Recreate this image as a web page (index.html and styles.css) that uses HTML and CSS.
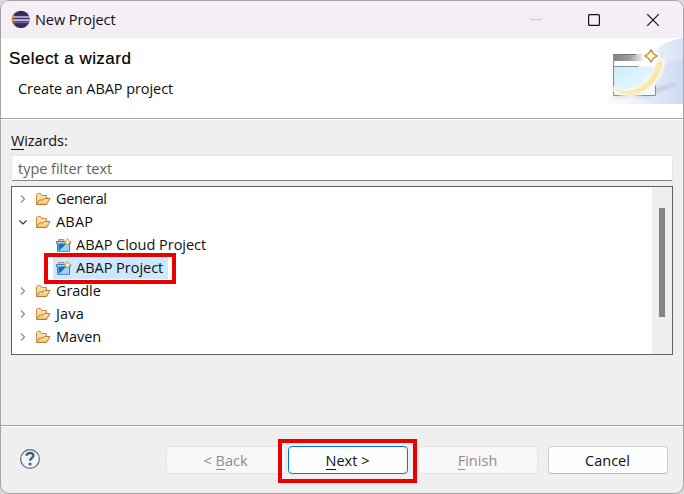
FILE: index.html
```
<!DOCTYPE html>
<html lang="en">
<head>
<meta charset="utf-8">
<title>New Project</title>
<link rel="stylesheet" href="styles.css">
</head>
<body>
<svg class="defs" width="0" height="0" aria-hidden="true">
  <defs>
    <linearGradient id="fold" x1="0" y1="0" x2="0" y2="1"><stop offset="0" stop-color="#ffeab4"/><stop offset="1" stop-color="#efbd6b"/></linearGradient>
    <linearGradient id="ball" x1="0" y1="0" x2="0" y2="1"><stop offset="0" stop-color="#2b2350"/><stop offset=".6" stop-color="#473a86"/><stop offset="1" stop-color="#2b2350"/></linearGradient>
    <symbol id="folder" viewBox="0 0 16 14">
      <path d="M1.5 11.5V2.8L2.7 1.5H5.5L6.7 3.5H11.5V6" fill="#f8dda4" stroke="#c58b43"/>
      <path d="M1.5 12.5 4.5 8H8L9.5 6.5H15L11.5 12.5Z" fill="url(#fold)" stroke="#b87931" stroke-linejoin="round"/>
    </symbol>
    <symbol id="project" viewBox="0 0 16 14">
      <path d="M2.5 3V1.5H8V3" fill="#e9c59b" stroke="#b88d68"/>
      <path d="M.5 3.5H14.5V5.5H13.5V13.3H1.5V5.5H.5Z" fill="#b5d6f5" stroke="#4e71b2"/>
      <path d="M2.5 5.5H12.5V12.5H2.5Z" fill="#a0d0f4"/>
      <path d="M2.5 5.5H10.5L3.5 12.5H2.5Z" fill="#1274be"/>
      <path d="M11.5.4 12.6 2.9 15.1 4 12.6 5.1 11.5 7.6 10.4 5.1 7.9 4 10.4 2.9Z" fill="#fff3b8" stroke="#c29c48" stroke-width=".9"/>
      <path d="M11.5 2.2V5.8M9.7 4H13.3" stroke="#fffce8"/>
    </symbol>
    <symbol id="closed" viewBox="0 0 8 10"><path d="M2 1.5 5.5 5 2 8.5" fill="none" stroke="#858585" stroke-width="1.1"/></symbol>
    <symbol id="open" viewBox="0 0 8 10"><path d="M.5 3.5 4 7 7.5 3.5" fill="none" stroke="#333" stroke-width="1.2"/></symbol>
  </defs>
</svg>
<div class="window">
  <header class="titlebar">
    <svg class="logo" width="19" height="19" viewBox="0 0 19 19">
      <circle cx="9" cy="9.3" r="8.6" fill="#f39a35"/>
      <circle cx="10.2" cy="9.3" r="8.6" fill="url(#ball)"/>
      <path d="M2 7H18.4M1.8 10.2H18.6" stroke="#c9c5dc" stroke-width="1.7"/>
      <path d="M2 12.3H18.2" stroke="#8d86b4" stroke-width=".8"/>
    </svg>
    <span class="caption">New Project</span>
    <svg class="controls" width="131" height="14" viewBox="0 0 131 14">
      <path d="M0 6.5H12" stroke="#c7c4cb"/>
      <rect x="58.6" y="1.6" width="10.8" height="10.8" rx="1" fill="none" stroke="#111" stroke-width="1.2"/>
      <path d="M117.2 1.2 128.8 12.8M128.8 1.2 117.2 12.8" stroke="#111" stroke-width="1.2"/>
    </svg>
  </header>
  <section class="banner">
    <div>
      <h1>Select a wizard</h1>
      <p>Create an ABAP project</p>
    </div>
    <svg class="art" width="75" height="66" viewBox="0 0 75 66">
      <defs>
        <linearGradient id="sky" x1="0" x2="1"><stop stop-color="#e8effb" stop-opacity=".3"/><stop offset="1" stop-color="#cbd8f2"/></linearGradient>
        <linearGradient id="bar" x1="0" x2="1"><stop stop-color="#858585"/><stop offset=".5" stop-color="#999"/><stop offset="1" stop-color="#fff"/></linearGradient>
        <linearGradient id="pane" x1="0" y1="0" x2="1" y2="1"><stop stop-color="#cdebfb"/><stop offset="1" stop-color="#f5fcff"/></linearGradient>
        <filter id="soft" x="-20%" y="-20%" width="140%" height="140%"><feGaussianBlur stdDeviation="1"/></filter>
      </defs>
      <path d="M46 14Q57 2 75 0V66H0V60L46 56Z" fill="url(#sky)" opacity=".75"/>
      <path d="M48 32Q59 22 75 21V66H10L48 58Z" fill="url(#sky)" opacity=".75"/>
      <path d="M0 60 66 45 70 46 40 60Z" fill="#b5b7d2" opacity=".45" filter="url(#soft)"/>
      <path d="M5.5 16.5H47.5V57.5H5.5Z" fill="#fff"/>
      <path d="M5 16H37V23H5Z" fill="url(#bar)"/>
      <path d="M5 16.5H28" stroke="#777"/>
      <path d="M6 28.5H47V57H6Z" fill="url(#pane)"/>
      <path d="M6 28.5H30" stroke="#83949b"/>
      <path d="M5.5 16V57.5H47.5V47" fill="none" stroke="#878f95"/>
      <path d="M3 49Q8 57 22 58C38 57 53 43 56 24Q54 19 48 24C48 38 34 51 21 53Q11 53 3 49Z" fill="#fffce9" stroke="#fffce9" stroke-width="2" filter="url(#soft)"/>
      <path d="M3 49Q10 56 22 57C38 56 52 43 55 25Q53 20 48 25C47 39 34 50 21 53Q11 53 3 49Z" fill="#f9e9b3"/>
      <path d="M51 25 50 33 46 41 39 48 30 53" fill="none" stroke="#eed89a" stroke-width="1.2" stroke-dasharray="1.2 2.4"/>
      <circle cx="43" cy="18" r="8" fill="#fff" opacity=".8" filter="url(#soft)"/>
      <path d="M43 12 45.4 15.6 49 18 45.4 20.4 43 24 40.6 20.4 37 18 40.6 15.6Z" fill="#fff8d8" stroke="#b99238" stroke-width="1.4"/>
    </svg>
  </section>
  <main class="body">
    <label class="label" for="filter"><u>W</u>izards:</label>
    <div class="filter" id="filter"><span>type filter text</span></div>
    <div class="tree">
      <ul class="rows">
        <li class="tight"><svg class="twist"><use href="#closed"/></svg><svg class="icon"><use href="#folder"/></svg><span>General</span></li>
        <li class="wide"><svg class="twist"><use href="#open"/></svg><svg class="icon"><use href="#folder"/></svg><span>ABAP</span></li>
        <li class="child"><svg class="icon"><use href="#project"/></svg><span>ABAP Cloud Project</span></li>
        <li class="child selected"><svg class="icon"><use href="#project"/></svg><span>ABAP Project</span><i class="mark mark-row"></i></li>
        <li><svg class="twist"><use href="#closed"/></svg><svg class="icon"><use href="#folder"/></svg><span>Gradle</span></li>
        <li class="wide"><svg class="twist"><use href="#closed"/></svg><svg class="icon"><use href="#folder"/></svg><span>Java</span></li>
        <li><svg class="twist"><use href="#closed"/></svg><svg class="icon"><use href="#folder"/></svg><span>Maven</span></li>
      </ul>
      <div class="scroll"><div class="thumb"></div></div>
    </div>
  </main>
  <footer class="footer">
    <svg class="help" width="22" height="22" viewBox="0 0 22 22">
      <circle cx="11" cy="11" r="9.4" fill="#f4f5f7" stroke="#576987" stroke-width="1.2"/>
      <path d="M7.4 7.7Q8 5 11.1 5 14.4 5 14.4 7.8C14.4 10 11 10 11 12.8" fill="none" stroke="#485a7c" stroke-width="2.3"/>
      <circle cx="11" cy="16" r="1.5" fill="#485a7c"/>
    </svg>
    <div class="buttons">
      <div class="button disabled"><span>&lt; <u>B</u>ack</span></div>
      <div class="button primary"><span><u>N</u>ext &gt;</span><i class="mark mark-next"></i></div>
      <div class="button disabled"><span><u>F</u>inish</span></div>
      <div class="button"><span>Cancel</span></div>
    </div>
  </footer>
</div>
</body>
</html>
```
FILE: styles.css
```
* { box-sizing: border-box; }
body { margin: 0; background: #d9d9d9; font: 14.5px/20px "Open Sans", "Noto Sans", sans-serif; letter-spacing: -0.07px; color: #101010; }
.defs { position: absolute; }
.window { width: 684px; height: 494px; border: 1px solid #a5a5a5; border-radius: 9px; background: #efefef; overflow: hidden; display: flex; flex-direction: column; }
.titlebar { height: 37px; flex: none; display: flex; align-items: center; padding: 0 22px 0 10px; background: #f4eff7; }
.caption { margin-left: 5px; }
.controls { margin-left: auto; }
.banner { height: 81px; flex: none; display: flex; justify-content: space-between; background: #fff; border-bottom: 1px solid #a0a0a0; box-shadow: 0 1px #fff; padding-left: 8px; }
h1 { margin: 11px 0 0; font: 17px/20px "Liberation Sans", sans-serif; letter-spacing: .47px; color: #000; -webkit-text-stroke: .2px #000; }
p { margin: 10px 0 0 9px; }
.art { flex: none; }
.body { padding: 12px 10px 0; height: 306px; flex: none; }
.label { display: block; letter-spacing: -.1px; }
u { text-decoration: none; border-bottom: 1px solid currentColor; display: inline-block; line-height: 16px; }
.filter { height: 26px; margin-top: 4px; border: 1px solid #e7e7e7; border-bottom-color: #858585; background: #fff; color: #626262; letter-spacing: -.02px; padding: 3px 6px; border-radius: 2px; }
.tree { height: 169px; margin-top: 5px; border: 1px solid #606060; background: #fff; display: flex; }
.rows { list-style: none; flex: 1; margin: 0; padding: 0; }
li { height: 23px; display: flex; align-items: center; padding-left: 7px; }
.twist { width: 8px; height: 10px; margin-right: 8px; }
.icon { width: 16px; height: 14px; margin-right: 5px; flex: none; }
.tight { letter-spacing: -.4px; }
.wide { letter-spacing: .2px; }
.child { margin-left: 37px; padding-left: 7px; width: max-content; letter-spacing: -.02px; }
.child .icon { margin-right: 4px; }
.selected { position: relative; background: #cce8ff; width: 115px; margin-left: 41px; padding-left: 3px; }
.scroll { width: 20px; background: #efefef; padding: 21px 0 0 7px; }
.thumb { width: 6px; height: 109px; background: #858585; }
.mark { position: absolute; border: 4px solid #e90000; }
.mark-row { left: -9px; top: -3px; width: 132px; height: 31px; }
.footer { flex: 1; border-top: 1px solid #a0a0a0; box-shadow: inset 0 1px #fff; display: flex; justify-content: space-between; padding: 20px 15px 0 18px; }
.help { margin-top: 2px; }
.buttons { display: flex; height: 28px; }
.button { position: relative; width: 120px; height: 28px; border: 1px solid #cecece; border-bottom-color: #b9b9b9; border-radius: 4px; background: #fdfdfd; display: flex; align-items: center; justify-content: center; padding: 2px 1px 0 0; margin-left: 10px; letter-spacing: .02px; }
.disabled { color: #8d8d8d; background: #f9f9f9; border-color: #e5e5e5; }
.primary { margin-left: 2px; border-color: #0078d4; }
.mark-next { left: -11px; top: -8px; width: 139px; height: 44px; }
```
